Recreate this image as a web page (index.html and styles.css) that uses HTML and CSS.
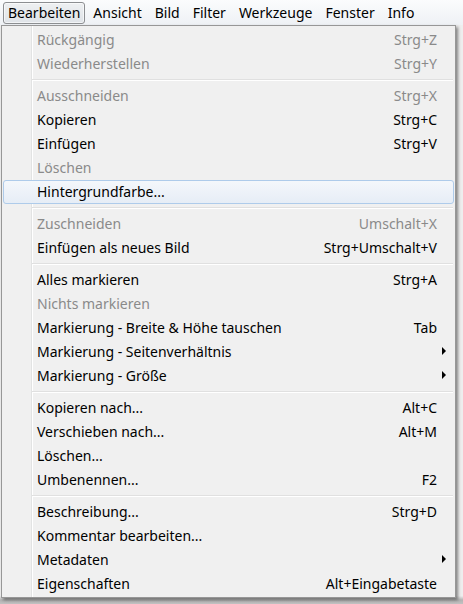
FILE: index.html
```html
<!DOCTYPE html>
<html lang="de">
<head>
<meta charset="utf-8">
<title>Bearbeiten</title>
<link rel="stylesheet" href="styles.css">
</head>
<body>
<div class="menubar">
  <span class="mb-item active">Bearbeiten</span>
  <span class="mb-item">Ansicht</span>
  <span class="mb-item">Bild</span>
  <span class="mb-item">Filter</span>
  <span class="mb-item">Werkzeuge</span>
  <span class="mb-item">Fenster</span>
  <span class="mb-item">Info</span>
</div>
<div class="menu">
  <div class="item disabled"><span class="label">Rückgängig</span><span class="key">Strg+Z</span><span class="sub"></span></div>
  <div class="item disabled"><span class="label">Wiederherstellen</span><span class="key">Strg+Y</span><span class="sub"></span></div>
  <div class="sep"></div>
  <div class="item disabled"><span class="label">Ausschneiden</span><span class="key">Strg+X</span><span class="sub"></span></div>
  <div class="item"><span class="label">Kopieren</span><span class="key">Strg+C</span><span class="sub"></span></div>
  <div class="item"><span class="label">Einfügen</span><span class="key">Strg+V</span><span class="sub"></span></div>
  <div class="item disabled"><span class="label">Löschen</span><span class="key"></span><span class="sub"></span></div>
  <div class="item hover"><span class="label">Hintergrundfarbe...</span><span class="key"></span><span class="sub"></span></div>
  <div class="sep"></div>
  <div class="item disabled"><span class="label">Zuschneiden</span><span class="key">Umschalt+X</span><span class="sub"></span></div>
  <div class="item"><span class="label">Einfügen als neues Bild</span><span class="key">Strg+Umschalt+V</span><span class="sub"></span></div>
  <div class="sep"></div>
  <div class="item"><span class="label">Alles markieren</span><span class="key">Strg+A</span><span class="sub"></span></div>
  <div class="item disabled"><span class="label">Nichts markieren</span><span class="key"></span><span class="sub"></span></div>
  <div class="item"><span class="label">Markierung - Breite &amp; Höhe tauschen</span><span class="key">Tab</span><span class="sub"></span></div>
  <div class="item"><span class="label">Markierung - Seitenverhältnis</span><span class="key"></span><span class="sub"><i class="arrow"></i></span></div>
  <div class="item"><span class="label">Markierung - Größe</span><span class="key"></span><span class="sub"><i class="arrow"></i></span></div>
  <div class="sep"></div>
  <div class="item"><span class="label">Kopieren nach...</span><span class="key">Alt+C</span><span class="sub"></span></div>
  <div class="item"><span class="label">Verschieben nach...</span><span class="key">Alt+M</span><span class="sub"></span></div>
  <div class="item"><span class="label">Löschen...</span><span class="key"></span><span class="sub"></span></div>
  <div class="item"><span class="label">Umbenennen...</span><span class="key">F2</span><span class="sub"></span></div>
  <div class="sep"></div>
  <div class="item"><span class="label">Beschreibung...</span><span class="key">Strg+D</span><span class="sub"></span></div>
  <div class="item"><span class="label">Kommentar bearbeiten...</span><span class="key"></span><span class="sub"></span></div>
  <div class="item"><span class="label">Metadaten</span><span class="key"></span><span class="sub"><i class="arrow"></i></span></div>
  <div class="item"><span class="label">Eigenschaften</span><span class="key">Alt+Eingabetaste</span><span class="sub"></span></div>
</div>
</body>
</html>
```

FILE: styles.css
```css
html, body {
  margin: 0;
  padding: 0;
}
body {
  width: 463px;
  height: 604px;
  overflow: hidden;
  background: linear-gradient(#eeeeee 0, #eeeeee 596px, #b4b4b4 600px, #c2c2c2 604px);
  font-family: "Noto Sans", "Open Sans", sans-serif;
  font-size: 14px;
  color: #000;
}
.menubar {
  height: 25px;
  display: flex;
  align-items: center;
  padding-left: 3px;
  background: linear-gradient(#fbfcfd, #eef1f5);
  box-sizing: border-box;
}
.mb-item {
  height: 22px;
  line-height: 20px;
  padding: 0 4px 0 4px;
  margin-right: 3px;
  box-sizing: border-box;
  border: 1px solid transparent;
  white-space: nowrap;
}
.mb-item.active {
  border-color: #8c8e91;
  border-radius: 3px;
  background: linear-gradient(#eef0f2, #dfe3e8);
  box-shadow: inset 0 0 0 1px rgba(255,255,255,0.6);
}
.menu {
  width: 455px;
  margin-left: 1px;
  box-sizing: border-box;
  border: 1px solid #979797;
  background-color: #f0f0f0;
  background-image: linear-gradient(to right, transparent 29px, #e2e3e3 29px, #e2e3e3 30px, #ffffff 30px, #ffffff 31px, transparent 31px);
  padding: 2px 0 1px;
  box-shadow: 2px 2px 3px rgba(0,0,0,0.45);
}
.item {
  display: flex;
  align-items: center;
  height: 24px;
  padding-bottom: 2px;
  margin: 0 1px;
  box-sizing: border-box;
  border: 1px solid transparent;
  white-space: nowrap;
}
.item.hover {
  border-color: #aecbea;
  border-radius: 3px;
  background: linear-gradient(#f4f7fb, #e6edf6);
}
.label {
  flex: 1;
  padding-left: 33px;
}
.key {
  text-align: right;
}
.sub {
  width: 16px;
  display: flex;
  align-items: center;
}
.arrow {
  display: block;
  width: 0;
  height: 0;
  margin-left: 5px;
  border-left: 4px solid #000;
  border-top: 4px solid transparent;
  border-bottom: 4px solid transparent;
}
.disabled {
  color: #8a8a8a;
}
.sep {
  height: 8px;
  margin-left: 30px;
  margin-right: 2px;
  background: linear-gradient(transparent 3px, #e0e0e0 3px, #e0e0e0 4px, #ffffff 4px, #ffffff 5px, transparent 5px);
}
```
